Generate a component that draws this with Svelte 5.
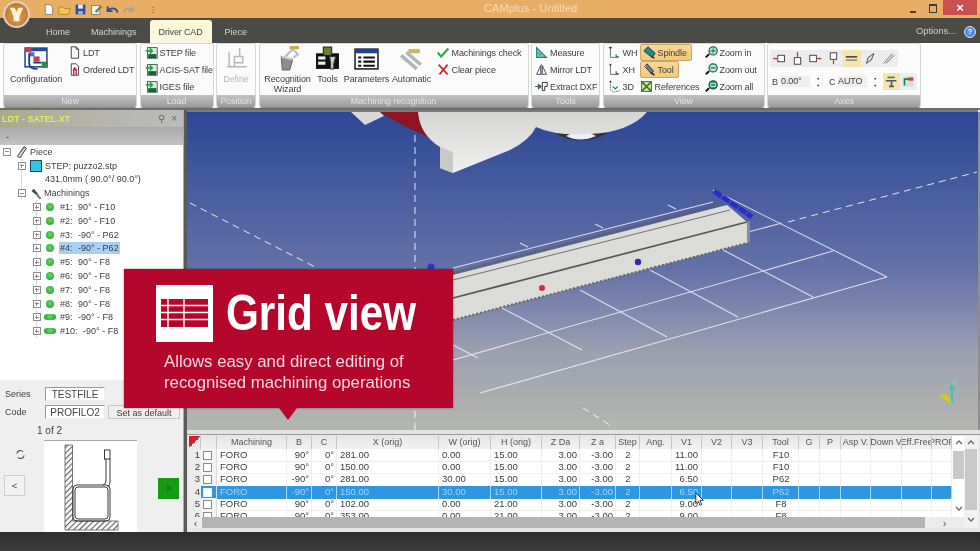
<script>
  const icons = {
    doc: '<path d="M4 1h6l3 3v11H4z" fill="#fff" stroke="#222"/><path d="M10 1v3h3" fill="none" stroke="#222"/>',
    docred: '<path d="M4 1h6l3 3v11H4z" fill="#fff" stroke="#222"/><path d="M7 15V8h3v7M7 8l2-3" fill="none" stroke="#b01c2c" stroke-width="1.6"/>',
    load: '<rect x="3" y="2" width="12" height="13" fill="#dfe9df" stroke="#2d4a35"/><rect x="4" y="10" width="10" height="5" fill="#1d5f38"/><path d="M1 6h7M6 3l3 3-3 3" fill="none" stroke="#1ea84a" stroke-width="2"/>',
    check: '<path d="M1 8l4 5 9-10" fill="none" stroke="#35a53e" stroke-width="2.6"/>',
    cross: '<path d="M2 2l11 12M13 2L3 14" fill="none" stroke="#d5262c" stroke-width="2.2"/>',
    measure: '<path d="M2 14V2l12 12z" fill="#7fd0c4" stroke="#1d7f80" stroke-width="1.4"/><path d="M5 11V8l3 3z" fill="#fff" stroke="#1d7f80"/>',
    mirror: '<path d="M7 3v11H2zM9 3v11h5z" fill="none" stroke="#445" stroke-width="1.1"/><path d="M8 1v14" stroke="#777" stroke-dasharray="2 1"/>',
    extract: '<path d="M0 8h4V5l4 3-4 3V8" fill="#3f78b5" stroke="#244"/><path d="M9 3h6v5h-3v5H9z" fill="none" stroke="#333" stroke-width="1.2"/>',
    wh: '<path d="M3 2v12h10" fill="none" stroke="#555"/><path d="M1 2h4" stroke="#555"/><rect x="2" y="1" width="2" height="2" fill="#222"/><path d="M10 10v3h3" fill="none" stroke="#1b8a5a" stroke-width="1.4"/>',
    xh: '<path d="M3 2v12h10" fill="none" stroke="#555"/><rect x="2" y="1" width="2" height="2" fill="#222"/><path d="M10 10v3h3" fill="none" stroke="#c02639" stroke-width="1.4"/>',
    three: '<path d="M3 2v10l4 3 8-2" fill="none" stroke="#555" stroke-dasharray="2 1"/><path d="M6 8l3 3 3-3" fill="none" stroke="#1b8a5a" stroke-width="1.4"/><rect x="2" y="1" width="2" height="2" fill="#222"/>',
    spindle: '<path d="M1 6l5-5 9 8-4 5z" fill="#1f8f80" stroke="#124"/><path d="M11 13l3 2" stroke="#222" stroke-width="2"/>',
    tool: '<path d="M2 4l3-3 8 9-3 3z" fill="#6a7d92" stroke="#223"/><path d="M10 12l4 3" stroke="#222" stroke-width="2"/><path d="M1 2l3 3" stroke="#eee"/>',
    refs: '<rect x="2" y="2" width="12" height="12" fill="#e9e59a" stroke="#23803c" stroke-width="1.3"/><path d="M2 2l12 12M14 2L2 14" stroke="#23803c" stroke-width="2"/>',
    zin: '<circle cx="10" cy="6" r="5" fill="#bfe7cf" stroke="#126a48" stroke-width="1.5"/><path d="M5 10l-4 4" stroke="#111" stroke-width="2.6"/><path d="M7 6h6M10 3v6" stroke="#126a48" stroke-width="1.2"/>',
    zout: '<circle cx="10" cy="6" r="5" fill="#bfe7cf" stroke="#126a48" stroke-width="1.5"/><path d="M5 10l-4 4" stroke="#111" stroke-width="2.6"/><path d="M7 6h6" stroke="#126a48" stroke-width="1.4"/>',
    zall: '<circle cx="10" cy="6" r="5" fill="#2e9a68" stroke="#0d5a3a" stroke-width="1.5"/><path d="M5 10l-4 4" stroke="#111" stroke-width="2.6"/><path d="M7 4h6v4H7z" fill="none" stroke="#dff" />',
    config: '<rect x="1" y="2" width="21" height="18" fill="#fff" stroke="#1a3c80" stroke-width="1.4"/><rect x="1" y="2" width="21" height="3" fill="#1f4aa0"/><rect x="1" y="1" width="6" height="5" fill="#c8404c"/><rect x="9" y="10" width="6" height="5" fill="#c8404c"/><rect x="5" y="6" width="5" height="4" fill="#3f78c5"/><rect x="17" y="15" width="6" height="6" fill="#2d8a4a"/><path d="M5 7v10c0 3 3 5 8 5M9 16h8" fill="none" stroke="#1a3c80" stroke-width="1.8"/>',
    define: '<path d="M5 6v14h17M3 20h7M10 20V10h8v6h-8M15 2v8" fill="none" stroke="#b8b8b8" stroke-width="1.4"/>',
    wizard: '<path d="M6 10l11 3-3 10H7z" fill="#8b8f94" stroke="#666"/><path d="M6 10l11 3" stroke="#ccc" stroke-width="2"/><path d="M10 10L17 3l5 5-4 3" fill="none" stroke="#b6bcc2" stroke-width="2"/><rect x="14" y="0" width="9" height="3" fill="#c8b04a"/>',
    tools: '<path d="M1 7h22v15H1z" fill="#111"/><rect x="8" y="1" width="8" height="8" fill="#6e7c3a" stroke="#222"/><rect x="3" y="10" width="7" height="3" fill="#eee"/><rect x="3" y="15" width="7" height="3" fill="#eee"/><path d="M14 10h6l-2 7v5h-3v-5z" fill="#ccc" stroke="#333"/>',
    params: '<rect x="1" y="3" width="22" height="19" fill="#fff" stroke="#111" stroke-width="1.4"/><rect x="1" y="3" width="22" height="4" fill="#1f3f9e"/><path d="M4 11h3M4 15h3M4 19h3M9 11h11M9 15h11M9 19h11" stroke="#111" stroke-width="2"/>',
    auto: '<path d="M2 9L17 22M7 6l14 12" stroke="#b0b6bc" stroke-width="3.4"/><path d="M9 3h11v4H9z" fill="#cdb75c"/>',
    a1: '<path d="M0 8h5" stroke="#d33" stroke-width="1.6"/><rect x="6" y="4" width="8" height="8" fill="#fff" stroke="#222"/>',
    a2: '<path d="M8 0v6" stroke="#d33" stroke-width="1.6"/><rect x="4" y="7" width="8" height="8" fill="#fff" stroke="#222"/>',
    a3: '<rect x="1" y="4" width="8" height="8" fill="#fff" stroke="#222"/><path d="M10 8h5" stroke="#d33" stroke-width="1.6"/>',
    a4: '<rect x="4" y="1" width="8" height="8" fill="#fff" stroke="#222"/><path d="M8 10v5" stroke="#d33" stroke-width="1.6"/>',
    a5: '<path d="M1 6h14" stroke="#222" stroke-width="1.6"/><path d="M1 10h14" stroke="#777" stroke-width="1.6"/>',
    a6: '<path d="M3 14l2-7 7-5-3 8z" fill="#ddd" stroke="#333"/>',
    a7: '<path d="M2 14L13 2M5 14L15 4" fill="none" stroke="#666" stroke-width="1.2"/>',
    l1: '<path d="M1 7h13M8 7v7M5 14h6" fill="none" stroke="#556" stroke-width="2"/><path d="M3 3h9" stroke="#2d8a4a" stroke-width="2"/>',
    l2: '<rect x="2" y="2" width="12" height="12" fill="#cfe2d2"/><path d="M3 13V5h8" fill="none" stroke="#1d7f50" stroke-width="2"/><path d="M8 3h6v4H8z" fill="#c8404c"/>',
    piece: '<path d="M3 14L11 2l3 2-8 12z" fill="#ddd" stroke="#333" stroke-width="1.2"/><path d="M4 13l8-10" stroke="#888"/>',
    wrench: '<path d="M3 5l3-3 4 5 5 7-2 1-5-6z" fill="#444"/><path d="M9 9l5 5" stroke="#999" stroke-width="1.6"/>'
  };

  const tree = [
    ["#1:", "90° - F10"],
    ["#2:", "90° - F10"],
    ["#3:", "-90° - P62"],
    ["#4:", "-90° - P62", "sel"],
    ["#5:", "90° - F8"],
    ["#6:", "90° - F8"],
    ["#7:", "90° - F8"],
    ["#8:", "90° - F8"],
    ["#9:", "-90° - F8", "long"],
    ["#10:", "-90° - F8", "long"],
  ];

  const headers = ["", "", "Machining", "B", "C", "X (orig)", "W (orig)", "H (orig)", "Z Da", "Z a", "Step", "Ang.", "V1", "V2", "V3", "Tool", "G", "P", "Asp V.", "Down V", "Eff.Free", "PROF"];

  const rows = [
    ["90°", "281.00", "0.00", "15.00", "11.00", "F10"],
    ["90°", "150.00", "0.00", "15.00", "11.00", "F10"],
    ["-90°", "281.00", "30.00", "15.00", "6.50", "P62"],
    ["-90°", "150.00", "30.00", "15.00", "6.50", "P62"],
    ["90°", "102.00", "0.00", "21.00", "9.00", "F8"],
    ["90°", "353.00", "0.00", "21.00", "9.00", "F8"],
  ];

  const gridLines = [
    "453,268 713,202", "713,190 887,277", "887,277 480,393", "833,251 453,360",
    "748,232 782,223", "723,250 813,297", "650,270 738,317", "580,290 667,337",
    "502,308 582,350", "453,345 478,358", "520,243 528,247", "595,224 603,228", "668,205 676,209",
  ];
</script>

{#snippet ic(name, box = 16)}
  <svg viewBox="0 0 {box} {box}" class="ico">{@html icons[name]}</svg>
{/snippet}

{#snippet small(name, label)}
  <div class="sm">{@render ic(name)}<span>{label}</span></div>
{/snippet}

{#snippet big(name, label, cls = "")}
  <div class="big {cls}">{@render ic(name, 24)}<span>{label}</span></div>
{/snippet}

{#snippet chevron(up)}
  <svg class="chev" viewBox="0 0 8 5"><path d={up ? "M1 4l3-3 3 3" : "M1 1l3 3 3-3"} fill="none" stroke="#666" stroke-width="1.3" /></svg>
{/snippet}

<div class="app">
  <header class="title">
    <div class="orb"><svg viewBox="0 0 24 24"><path d="M5 5h5l2 4 2-4h5l-4 9v5H9v-5z" fill="#fff3dc"/></svg></div>
    <div class="quick">
      <svg viewBox="0 0 16 16"><path d="M4 2h6l3 3v9H4z" fill="#fff" stroke="#777"/></svg>
      <svg viewBox="0 0 16 16"><path d="M1 5h5l2 2h7l-2 7H1z" fill="#f2c84e" stroke="#a5812a"/></svg>
      <svg viewBox="0 0 16 16"><rect x="2" y="2" width="12" height="12" fill="#2c4f9a"/><rect x="5" y="2" width="6" height="5" fill="#dfe6f4"/><rect x="5" y="10" width="6" height="4" fill="#9fb0d0"/></svg>
      <svg viewBox="0 0 16 16"><rect x="2" y="3" width="10" height="11" fill="#f5f2e8" stroke="#777"/><path d="M6 10l7-7 2 2-7 7z" fill="#5c7f5c"/></svg>
      <svg viewBox="0 0 16 16"><path d="M3 9a6 5 0 0 1 11 3M2 4v6h6" fill="none" stroke="#2a4d94" stroke-width="2.2"/></svg>
      <svg viewBox="0 0 16 16"><path d="M13 9a6 5 0 0 0-11 3M14 4v6H8" fill="none" stroke="#b09f93" stroke-width="2.2"/></svg>
      <span class="more">⁝</span>
    </div>
    <div class="caption">CAMplus - Untitled</div>
    <div class="winbtns">
      <span class="min"></span>
      <span class="rest"></span>
      <span class="close">×</span>
    </div>
  </header>

  <nav class="tabs">
    <span class="tab">Home</span>
    <span class="tab t-mach">Machinings</span>
    <span class="tab active">Driver CAD</span>
    <span class="tab">Piece</span>
    <span class="opts">Options...</span>
    <span class="help">?</span>
  </nav>

  <section class="ribbon">
    <div class="grp g-new">
      <div class="body">
        {@render big("config", "Configuration", "w-config")}
        <div class="col">
          {@render small("doc", "LDT")}
          {@render small("docred", "Ordered LDT")}
        </div>
      </div>
      <div class="foot">New</div>
    </div>
    <div class="grp g-load">
      <div class="body">
        <div class="col">
          {@render small("load", "STEP file")}
          {@render small("load", "ACIS-SAT file")}
          {@render small("load", "IGES file")}
        </div>
      </div>
      <div class="foot">Load</div>
    </div>
    <div class="grp g-pos">
      <div class="body">{@render big("define", "Define", "off w-def")}</div>
      <div class="foot">Position</div>
    </div>
    <div class="grp g-rec">
      <div class="body">
        <div class="big w-wiz">{@render ic("wizard", 24)}<span>Recognition<br />Wizard</span></div>
        {@render big("tools", "Tools", "w-tools")}
        {@render big("params", "Parameters", "w-par")}
        {@render big("auto", "Automatic", "w-auto")}
        <div class="col">
          {@render small("check", "Machinings check")}
          {@render small("cross", "Clear piece")}
        </div>
      </div>
      <div class="foot">Machining recognition</div>
    </div>
    <div class="grp g-tools">
      <div class="body">
        <div class="col">
          {@render small("measure", "Measure")}
          {@render small("mirror", "Mirror LDT")}
          {@render small("extract", "Extract DXF")}
        </div>
      </div>
      <div class="foot">Tools</div>
    </div>
    <div class="grp g-view">
      <div class="body">
        <div class="col c-axis">
          {@render small("wh", "WH")}
          {@render small("xh", "XH")}
          {@render small("three", "3D")}
        </div>
        <div class="col c-disp">
          <div class="sm on">{@render ic("spindle")}<span>Spindle</span></div>
          <div class="sm on">{@render ic("tool")}<span>Tool</span></div>
          {@render small("refs", "References")}
        </div>
        <div class="col">
          {@render small("zin", "Zoom in")}
          {@render small("zout", "Zoom out")}
          {@render small("zall", "Zoom all")}
        </div>
      </div>
      <div class="foot">View</div>
    </div>
    <div class="grp g-axes">
      <div class="axes">
        <div class="axrow">
          {#each ["a1", "a2", "a3", "a4"] as a}
            <span class="axbtn">{@render ic(a)}</span>
          {/each}
          <span class="axbtn lit">{@render ic("a5")}</span>
          <span class="axbtn">{@render ic("a6")}</span>
          <span class="axbtn">{@render ic("a7")}</span>
        </div>
        <div class="axvals">
          <span class="axlab">B</span><span class="axval">0.00°</span><span class="spin">⁚</span>
          <span class="axlab">C</span><span class="axval">AUTO</span><span class="spin">⁚</span>
          <span class="axbtn lit sq">{@render ic("l1")}</span>
          <span class="axbtn sq">{@render ic("l2")}</span>
        </div>
      </div>
      <div class="foot">Axes</div>
    </div>
  </section>

  <main class="main">
    <aside class="left">
      <div class="dock-head">
        <span class="dock-title">LDT - SATEL.XT</span>
        <span class="dock-btn">⚲</span>
        <span class="dock-btn">×</span>
      </div>
      <div class="dock-tools">-</div>

      <div class="tree">
        <div class="node l0"><i class="box minus"></i>{@render ic("piece")}<span>Piece</span></div>
        <div class="node l1"><i class="box"></i><b class="cube"></b><span>STEP: puzzo2.stp</span></div>
        <div class="node l1 nobox"><span>431.0mm ( 90.0°/ 90.0°)</span></div>
        <div class="node l1"><i class="box minus"></i>{@render ic("wrench")}<span>Machinings</span></div>
        {#each tree as [num, text, kind]}
          <div class="node l2">
            <i class="box"></i>
            <b class="dot" class:long={kind === "long"}></b>
            <span class:sel={kind === "sel"}><em>{num}</em> {text}</span>
          </div>
        {/each}
      </div>

      <div class="profile">
        <div class="frow"><label for="series">Series</label><input id="series" value="TESTFILE" readonly /></div>
        <div class="frow">
          <label for="code">Code</label><input id="code" value="PROFILO2" readonly />
          <span class="setdef">Set as default</span>
        </div>
        <div class="pager">1 of 2</div>
        <div class="preview-row">
          <div class="side">
            <svg class="refresh" viewBox="0 0 12 12"><path d="M2 5a4 4 0 0 1 7-2M10 7a4 4 0 0 1-7 2" fill="none" stroke="#555" stroke-width="1.2"/></svg>
            <span class="nav">&lt;</span>
          </div>
          <div class="preview">
            <svg viewBox="44 438 93 94">
              <defs>
                <pattern id="hatch" width="4" height="4" patternUnits="userSpaceOnUse" patternTransform="rotate(45)">
                  <rect width="4" height="4" fill="#fff" /><rect width="1.2" height="4" fill="#666" />
                </pattern>
              </defs>
              <path d="M65 442h7.5v76H118v9H65z" fill="url(#hatch)" stroke="#444" stroke-width=".7" />
              <g fill="none" stroke="#222" stroke-width=".9">
                <rect x="73" y="482" width="37" height="36" rx="4" />
                <rect x="75" y="484" width="33" height="32" rx="3" />
                <path d="M103 482q3-1 3-4v-22M108 484q2-2 2-6v-22" />
                <rect x="104.500" y="447" width="5.500" height="9" />
              </g>
            </svg>
          </div>
          <div class="side-r"><span class="go">&gt;</span></div>
        </div>
      </div>
    </aside>

    <div class="sash"></div>

    <div class="work">
      <div class="viewport">
        <svg viewBox="187 112 791 318" preserveAspectRatio="none">
          <defs>
            <linearGradient id="sky" x1="0" y1="0" x2="0" y2="1">
              <stop offset="0" stop-color="#2d4796" />
              <stop offset=".5" stop-color="#6472a8" />
              <stop offset=".75" stop-color="#9b9fb0" />
              <stop offset="1" stop-color="#b5b7ae" />
            </linearGradient>
            <linearGradient id="metal" x1="0" y1="0" x2="0" y2="1">
              <stop offset="0" stop-color="#d5d5d3" />
              <stop offset="1" stop-color="#f0f0ee" />
            </linearGradient>
          </defs>
          <rect x="187" y="112" width="791" height="318" fill="url(#sky)" />

          <g fill="none" stroke="#fff" stroke-dasharray="7 5" opacity=".85">
            <path d="M415 135V430" />
            <path d="M190 203L317 268" />
            <path d="M788 222L977 172" />
            <path d="M583 408L613 427" />
          </g>
          <g stroke="#eef0f6" stroke-width="1.1" opacity=".85">
            {#each gridLines as l}
              {@const [a, b] = l.split(" ")}
              <line x1={a.split(",")[0]} y1={a.split(",")[1]} x2={b.split(",")[0]} y2={b.split(",")[1]} />
            {/each}
          </g>

          <path d="M453 273L724 204" stroke="#5c5f63" stroke-width="2.4" stroke-dasharray="2 1" />
          <path d="M453 275L727 205L747 222L453 298z" fill="#dcdcd8" />
          <path d="M453 298L747 222V243L453 320z" fill="#dbdbd7" />
          <path d="M747 222l3-1v21l-3 1z" fill="#8b8d92" />
          <path d="M453 280L730 210" stroke="#55585a" stroke-width=".8" />
          <path d="M453 298L747 222" stroke="#55585a" stroke-width="1.7" />
          <path d="M453 320L747 243" stroke="#666" stroke-width="2" stroke-dasharray="2 2" />
          <path d="M714 191L752 217" stroke="#2a2ec8" stroke-width="5" stroke-dasharray="9 1" />
          <circle cx="638" cy="262" r="3.2" fill="#2b2bb5" />
          <circle cx="542" cy="288" r="3" fill="#c43048" />
          <circle cx="431" cy="267" r="3.5" fill="#2e34d0" />

          <path d="M351 112L365 125L384 116L380 112z" fill="#d9d9d6" />
          <path d="M380 112H418L437 141Q400 125 380 112z" fill="#8f1420" />
          <path d="M555 133Q580 148 608 133z" fill="#333" />
          <path d="M566 136Q580 143 596 136L590 133H572z" fill="#eef" />
          <path d="M418 112Q420 135 440 147V168L453 173L510 150Q530 140 536 127Q555 136 590 134Q630 132 647 112z" fill="url(#metal)" />
          <path d="M440 147L453 152V173L440 168z" fill="#c9c9c7" />

          <path d="M952 403V384" stroke="#3fc4b8" stroke-width="2" />
          <path d="M952 388l4-10" stroke="#6ad0c8" stroke-width="1.4" />
          <circle cx="952" cy="388" r="2.6" fill="#3fc4b8" />
          <path d="M939 395l8 7 5 1-5-9z" fill="#cfc82a" />
        </svg>
      </div>

      <div class="gridwrap">
        <div class="tablecol">
          <div class="tablerow">
            <div class="table">
              <div class="line head">
                {#each headers as h, i}
                  <div class="th" class:corner={i === 0}>{h}</div>
                {/each}
              </div>
              <div class="bodyrows">
                {#each rows as r, i}
                  <div class="line tr" class:picked={i === 3}>
                    <div class="rn">{i + 1}</div>
                    <div class="cb"><i></i></div>
                    <div class="td">FORO</div>
                    <div class="td rt">{r[0]}</div>
                    <div class="td rt">0°</div>
                    <div class="td">{r[1]}</div>
                    <div class="td">{r[2]}</div>
                    <div class="td">{r[3]}</div>
                    <div class="td rt">3.00</div>
                    <div class="td rt">-3.00</div>
                    <div class="td ct">2</div>
                    <div class="td"></div>
                    <div class="td rt v1">{r[4]}</div>
                    <div class="td"></div>
                    <div class="td"></div>
                    <div class="td ct">{r[5]}</div>
                    {#each Array(6) as _}<div class="td"></div>{/each}
                  </div>
                {/each}
              </div>
            </div>
            <div class="vbar inner">
              <span class="arr">{@render chevron(true)}</span>
              <span class="thumb"></span>
              <span class="arr dn">{@render chevron(false)}</span>
            </div>
          </div>
          <div class="hbar">
            <span class="harr">‹</span>
            <span class="hthumb"></span>
            <span class="harr">›</span>
          </div>
        </div>
        <div class="vbar outer">
          <span class="arr">{@render chevron(true)}</span>
          <span class="thumb"></span>
          <span class="arr dn">{@render chevron(false)}</span>
        </div>
      </div>
    </div>
  </main>

  <footer class="status"></footer>

  <div class="callout">
    <div class="call-top">
      <div class="call-icon">
        <svg viewBox="0 0 47 28">
          <path d="M0 0h47v28H0z" fill="#b5062c" />
          <path d="M0 6.500h47M0 13.500h47M0 20.500h47M7 0v28M23 0v28" stroke="#fff" stroke-width="1.400" />
        </svg>
      </div>
      <div class="call-title">Grid view</div>
    </div>
    <p>Allows easy and direct editing of<br />recognised machining operations</p>
  </div>

  <svg class="cursor" viewBox="0 0 12 18"><path d="M1 1v13l3-3 2 5 2-1-2-5h4z" fill="#fff" stroke="#111" /></svg>
</div>

<style>
  :global(body) {
    margin: 0;
    background: #333;
  }
  .app {
    position: relative;
    width: 980px;
    height: 551px;
    overflow: hidden;
    display: flex;
    flex-direction: column;
    font-family: "Liberation Sans", Arial, sans-serif;
    font-size: 9.5px;
    color: #3d3d3d;
    background: #3a3a3a;
    filter: blur(0.55px);
  }
  .ico {
    display: block;
    flex: none;
  }

  .title {
    height: 18px;
    flex: none;
    display: flex;
    align-items: center;
    background: #e9ae66;
    position: relative;
  }
  .orb {
    position: absolute;
    left: 3px;
    top: 1px;
    width: 27px;
    height: 27px;
    border-radius: 50%;
    border: 2px solid #d9d3c9;
    box-sizing: border-box;
    background: radial-gradient(circle at 50% 60%, #e39a45, #b5702b);
    z-index: 3;
  }
  .orb svg {
    display: block;
    width: 100%;
    height: 100%;
  }
  .quick {
    margin-left: 42px;
    display: flex;
    align-items: center;
    gap: 3px;
    height: 16px;
  }
  .quick svg {
    width: 13px;
    height: 13px;
  }
  .more {
    margin-left: 14px;
    font-size: 9px;
    color: #6d5a3c;
  }
  .caption {
    position: absolute;
    left: 484px;
    top: 2px;
    color: #f6dcb6;
    font-size: 11.2px;
    white-space: nowrap;
  }
  .winbtns {
    margin-left: auto;
    margin-right: 3px;
    display: flex;
    align-items: center;
    height: 100%;
  }
  .min {
    width: 6px;
    height: 2px;
    background: #4a3d2c;
    margin: 5px 13px 0 0;
  }
  .rest {
    width: 6px;
    height: 6px;
    border: 1px solid #3e3a30;
    border-top-width: 2px;
    margin-right: 6px;
    margin-top: -1px;
  }
  .close {
    width: 34px;
    height: 15px;
    margin-top: -3px;
    background: #c8504f;
    color: #fff;
    text-align: center;
    font: bold 13px/15px "Liberation Sans", sans-serif;
  }

  .tabs {
    height: 25px;
    flex: none;
    box-sizing: border-box;
    padding: 2px 0 0 35px;
    display: flex;
    align-items: stretch;
    background: #4a4a47;
    color: #d4d4d0;
    font-size: 9px;
  }
  .tab {
    padding: 3px 11px 0;
    line-height: 18px;
  }
  .t-mach {
    margin-left: -1px;
    margin-right: 2px;
  }
  .tab.active {
    width: 62px;
    box-sizing: border-box;
    background: linear-gradient(#fdf8d6, #fbf7e0);
    color: #444;
    border-radius: 3px 3px 0 0;
    padding: 3px 0 0;
    margin-right: 2px;
    text-align: center;
    letter-spacing: -0.15px;
  }
  .opts {
    margin-left: auto;
    margin-top: 5px;
    color: #cfcfcb;
    font-size: 9.4px;
  }
  .help {
    width: 10px;
    height: 10px;
    margin: 6px 4px 0 8px;
    border-radius: 50%;
    background: #4f8fd8;
    border: 1px solid #d5e3f3;
    color: #fff;
    font: bold 8px/10px "Liberation Sans", sans-serif;
    text-align: center;
  }

  .ribbon {
    height: 67px;
    flex: none;
    box-sizing: border-box;
    display: flex;
    gap: 2.5px;
    padding-left: 3px;
    background: #fefefe;
    border-bottom: 2px solid #6e6e6e;
    font-size: 9px;
    letter-spacing: -0.1px;
  }
  .grp {
    box-sizing: border-box;
    height: 65px;
    display: flex;
    flex-direction: column;
    border: 1px solid #d6d6d6;
    border-bottom: 1px solid #8a8a8a;
    border-radius: 3px;
    background: #fbfbfb;
  }
  .g-new { width: 134px; }
  .g-load { width: 74px; }
  .g-pos { width: 40px; }
  .g-rec { width: 270px; }
  .g-tools { width: 69px; }
  .g-view { width: 162px; }
  .g-axes { width: 154px; }
  .body {
    flex: 1;
    display: flex;
    min-height: 0;
  }
  .foot {
    height: 12px;
    flex: none;
    text-align: center;
    font-size: 9px;
    line-height: 13px;
    color: #e2e2e2;
    background: linear-gradient(#c2c2c2, #9b9b9b);
    border-radius: 0 0 2px 2px;
    white-space: nowrap;
    overflow: hidden;
  }
  .col {
    display: flex;
    flex-direction: column;
  }
  .sm {
    height: 17px;
    display: flex;
    align-items: center;
    gap: 2px;
    white-space: nowrap;
    box-sizing: border-box;
  }
  .sm .ico {
    width: 13px;
    height: 13px;
  }
  .big {
    display: flex;
    flex-direction: column;
    align-items: center;
    padding-top: 2px;
    white-space: nowrap;
    text-align: center;
    line-height: 10px;
  }
  .big .ico {
    width: 25px;
    height: 25px;
    margin-bottom: 3px;
  }
  .big.off {
    color: #b9b9b9;
  }
  .w-config { width: 58px; margin-left: 3px; margin-right: 3px; }
  .w-def { width: 38px; }
  .w-wiz { width: 50px; margin-left: 3px; }
  .w-tools { width: 30px; }
  .w-par { width: 44px; margin-left: 2px; }
  .w-auto { width: 42px; margin-left: 2px; margin-right: 4px; }
  .g-load .col { padding-left: 4px; }
  .g-tools .col { padding-left: 3px; }
  .c-axis { padding-left: 4px; width: 32px; }
  .c-disp { width: 68px; margin-right: -3px; }
  .on {
    align-self: flex-start;
    background: linear-gradient(#f8d89a, #f4c878);
    border: 1px solid #c9a56a;
    border-radius: 2px;
    padding: 0 4px 0 2px;
  }

  .axes {
    flex: 1;
    padding: 6px 0 0 2px;
  }
  .axrow {
    display: flex;
    width: 128px;
    height: 17px;
    align-items: center;
    background: #ececec;
  }
  .axbtn {
    width: 18.2px;
    height: 17px;
    display: flex;
    align-items: center;
    justify-content: center;
  }
  .axbtn .ico {
    width: 13px;
    height: 13px;
  }
  .axbtn.lit {
    background: #f6e3ae;
  }
  .axvals {
    display: flex;
    align-items: center;
    margin-top: 6px;
    height: 17px;
  }
  .axlab {
    margin-left: 2px;
    width: 9px;
  }
  .axval {
    width: 29px;
    background: #efefef;
    height: 11px;
    line-height: 11px;
  }
  .spin {
    width: 16px;
    text-align: center;
    font-weight: bold;
    font-size: 11px;
    margin-right: 1px;
  }
  .axvals .spin:nth-of-type(6) {
    margin-right: 0;
  }
  .axbtn.sq {
    width: 17px;
    background-color: #eee;
  }
  .axbtn.sq.lit {
    background: #f6e3ae;
  }

  .main {
    flex: 1;
    min-height: 0;
    display: flex;
  }
  .left {
    width: 183px;
    flex: none;
    display: flex;
    flex-direction: column;
    background: #fff;
  }
  .dock-head {
    height: 17px;
    flex: none;
    display: flex;
    align-items: center;
    gap: 6px;
    padding: 0 6px 0 2px;
    background: linear-gradient(90deg, #a8ab8a, #b6b6b0 60%, #bcbcbc);
    color: #8d8d8d;
  }
  .dock-title {
    margin-right: auto;
    color: #e1ea62;
    font-weight: bold;
    font-size: 9px;
  }
  .dock-btn {
    font-size: 10px;
    color: #666;
  }
  .dock-tools {
    height: 18px;
    flex: none;
    padding-left: 6px;
    line-height: 20px;
    background: linear-gradient(#a9a9a9, #c4c4c4);
    color: #333;
  }
  .tree {
    height: 235px;
    flex: none;
    box-sizing: border-box;
    font-size: 9px;
  }
  .node {
    height: 13.8px;
    display: flex;
    align-items: center;
    position: relative;
    white-space: nowrap;
  }
  .node .ico {
    width: 13px;
    height: 13px;
    margin-right: 2px;
  }
  .box {
    width: 6px;
    height: 6px;
    flex: none;
    border: 1px solid #8c8c8c;
    margin-right: 4px;
    position: relative;
    z-index: 1;
    background: #fff linear-gradient(#8c8c8c, #8c8c8c) center / 4px 1px no-repeat;
  }
  .box:not(.minus)::after {
    content: "";
    position: absolute;
    left: 2px;
    top: 0;
    width: 1px;
    height: 4px;
    margin-top: 1px;
    background: #8c8c8c;
  }
  .l1::before,
  .l2::before {
    content: "";
    position: absolute;
    top: 0;
    bottom: 0;
    width: 1px;
    background: #dcdcdc;
  }
  .l1::before { left: 21px; }
  .l2::before { left: 36px; }
  .l0 { padding-left: 3px; }
  .l1 { padding-left: 18px; }
  .l1 .box { margin-right: 3px; }
  .l1.nobox { padding-left: 45px; }
  .l2 { padding-left: 33px; }
  .cube {
    width: 10px;
    height: 10px;
    margin: 0 3px 0 1px;
    background: #2fc6e6;
    border: 1px solid #246;
  }
  .dot {
    width: 8px;
    height: 8px;
    border-radius: 50%;
    margin: 0 6px 0 1px;
    background: radial-gradient(circle at 50% 40%, #6ed56e, #1c9a2c);
    flex: none;
  }
  .dot.long {
    width: 12px;
    height: 6px;
    border-radius: 4px;
    margin: 0 4px 0 -1px;
  }
  .node em {
    font-style: normal;
    margin-right: 3px;
  }
  .sel {
    background: #a8d0f5;
    margin-left: -1px;
    padding: 1px;
  }

  .profile {
    flex: 1;
    background: #efefef;
    padding-top: 7px;
    min-height: 0;
    display: flex;
    flex-direction: column;
  }
  .frow {
    height: 14px;
    margin-bottom: 4px;
    display: flex;
    align-items: center;
  }
  .frow label {
    width: 45px;
    padding-left: 5px;
    box-sizing: border-box;
    font-size: 9px;
  }
  .frow input {
    width: 60px;
    height: 14px;
    box-sizing: border-box;
    border: 1px solid #9a9a9a;
    border-right-color: #eee;
    border-bottom-color: #eee;
    padding: 0;
    background: #fff;
    text-align: center;
    font: 10px "Liberation Sans", sans-serif;
    color: #444;
    outline: none;
  }
  .setdef {
    margin-left: 3px;
    width: 72px;
    height: 14px;
    line-height: 14px;
    text-align: center;
    border: 1px solid #c8c8c8;
    box-sizing: border-box;
    font-size: 9px;
  }
  .pager {
    margin-left: 37px;
    height: 15px;
    line-height: 15px;
    font-size: 10px;
  }
  .preview-row {
    flex: 1;
    display: flex;
    min-height: 0;
    margin-top: 2px;
  }
  .side {
    width: 44px;
    flex: none;
    padding-left: 4px;
    box-sizing: border-box;
  }
  .refresh {
    display: block;
    width: 11px;
    height: 11px;
    margin: 9px 0 0 11px;
  }
  .nav,
  .go {
    display: block;
    width: 21px;
    height: 21px;
    line-height: 20px;
    text-align: center;
    box-sizing: border-box;
  }
  .nav {
    margin-top: 15px;
    border: 1px solid #cfcfcf;
    background: #f2f2f2;
  }
  .go {
    margin: 38px 0 0 21px;
    background: #159a15;
    color: #0d6a10;
    font-weight: bold;
  }
  .preview {
    width: 93px;
    flex: none;
    background: #fff;
    border-top: 1px solid #aaa;
    box-sizing: border-box;
    overflow: hidden;
  }
  .preview svg {
    display: block;
    width: 93px;
    height: 94px;
  }

  .sash {
    width: 4px;
    flex: none;
    background: #5a5a5a;
    border-left: 1px solid #aaa;
    box-sizing: border-box;
  }
  .work {
    flex: 1;
    min-width: 0;
    display: flex;
    flex-direction: column;
    background: #e2e2e2;
  }
  .viewport {
    height: 318px;
    flex: none;
    margin-top: 2px;
    margin-right: 2px;
    box-shadow: 0 -2px 0 #7b7b7b, 2px 0 0 #8e8e8e;
    overflow: hidden;
  }
  .viewport svg {
    display: block;
    width: 100%;
    height: 100%;
  }

  .gridwrap {
    flex: 1;
    min-height: 0;
    margin-top: 4px;
    padding: 1px 2px 4px;
    display: flex;
    background: #e8e8e8;
    border-top: 1px solid #9a9a9a;
    box-sizing: border-box;
  }
  .tablecol {
    width: 775px;
    flex: none;
    display: flex;
    flex-direction: column;
    min-height: 0;
  }
  .tablerow {
    flex: 1;
    min-height: 0;
    display: flex;
  }
  .table {
    width: 763px;
    flex: none;
    background: #fff;
    display: flex;
    flex-direction: column;
    min-height: 0;
  }
  .line {
    display: grid;
    grid-template-columns: 12px 16px 70px 25px 25px 102px 52px 51px 38px 36px 24px 32px 30px 30px 31px 36px 21px 21px 30px 31px 30px 20px;
  }
  .head {
    height: 13px;
    flex: none;
    background: linear-gradient(#e6e6e6, #f2f2f2);
  }
  .th {
    border-right: 1px solid #c6c6c6;
    line-height: 13px;
    overflow: hidden;
    white-space: nowrap;
    display: flex;
    justify-content: center;
    font-size: 9px;
    color: #555;
  }
  .corner {
    background: linear-gradient(135deg, #d3202a 50%, #e8e8e8 50%);
  }
  .bodyrows {
    flex: 1;
    min-height: 0;
    overflow: hidden;
  }
  .tr {
    height: 12.2px;
    line-height: 12.2px;
  }
  .rn {
    background: #ececec;
    text-align: right;
    padding-right: 1px;
    border-bottom: 1px solid #ddd;
  }
  .cb {
    background: #f3f3f3;
    border-right: 1px solid #ddd;
    border-bottom: 1px solid #ddd;
  }
  .cb i {
    display: block;
    width: 7px;
    height: 7px;
    margin: 2px 0 0 2px;
    background: #fff;
    border: 1px solid #8a8a8a;
  }
  .td {
    border-right: 1px solid #efefef;
    border-bottom: 1px solid #efefef;
    padding: 0 2px 0 3px;
    overflow: hidden;
    white-space: nowrap;
  }
  .rt { text-align: right; }
  .ct { text-align: center; }
  .v1 { padding-right: 3px; }
  .picked .td {
    background: #2f96e2;
    color: #a6d2f3;
    border-right-color: #9fdcf0;
    border-bottom-color: #2f96e2;
  }
  .picked .cb {
    background: #2f96e2;
  }
  .picked .cb i {
    border-color: #e8f4fc;
  }
  .hbar {
    height: 11px;
    flex: none;
    display: flex;
    align-items: center;
    background: #ececec;
    color: #555;
  }
  .harr {
    width: 13px;
    text-align: center;
    font-size: 11px;
    line-height: 10px;
    flex: none;
  }
  .hthumb {
    width: 723px;
    height: 11px;
    background: #b4b4b4;
  }
  .hbar .harr:last-child {
    margin-left: 13px;
  }
  .vbar {
    width: 12px;
    flex: none;
    display: flex;
    flex-direction: column;
    align-items: center;
    background: #fff;
    padding: 0 1px;
  }
  .outer {
    width: 14px;
    box-sizing: border-box;
    background: #f1f1f1;
  }
  .arr {
    height: 13px;
    flex: none;
    display: flex;
    align-items: center;
  }
  .chev {
    display: block;
    width: 8px;
    height: 5px;
  }
  .thumb {
    align-self: stretch;
    height: 28px;
    margin-top: 2px;
    background: #c9c9c9;
  }
  .outer .thumb {
    height: 61px;
    margin-top: 0;
  }
  .dn {
    margin-top: auto;
    margin-bottom: 2px;
  }

  .status {
    height: 19px;
    flex: none;
    background: linear-gradient(#2e2e2e, #3d3d3d);
  }

  .callout {
    position: absolute;
    left: 124px;
    top: 269px;
    width: 329px;
    height: 139px;
    box-sizing: border-box;
    padding: 16px 0 0 32px;
    background: #b5062c;
    box-shadow: 0 0 2px rgba(60, 0, 10, 0.5);
    color: #fff;
  }
  .callout::after {
    content: "";
    position: absolute;
    left: 155px;
    bottom: -12px;
    border: 9px solid transparent;
    border-bottom-width: 0;
    border-top: 12px solid #b5062c;
  }
  .call-top {
    display: flex;
    align-items: center;
  }
  .call-icon {
    width: 57px;
    height: 57px;
    box-sizing: border-box;
    padding: 14px 5px;
    background: #fff;
  }
  .call-icon svg {
    display: block;
    width: 47px;
    height: 28px;
  }
  .call-title {
    margin-left: 13px;
    font: bold 50px/57px "Liberation Sans", sans-serif;
    white-space: nowrap;
    transform: scaleX(0.845);
    transform-origin: left center;
  }
  .callout p {
    margin: 9px 0 0 8px;
    font: 16.8px/21px "Liberation Sans", Arial, sans-serif;
    color: #f3d8dc;
    white-space: nowrap;
  }

  .cursor {
    position: absolute;
    left: 695px;
    top: 492px;
    width: 10px;
    height: 15px;
  }
</style>
